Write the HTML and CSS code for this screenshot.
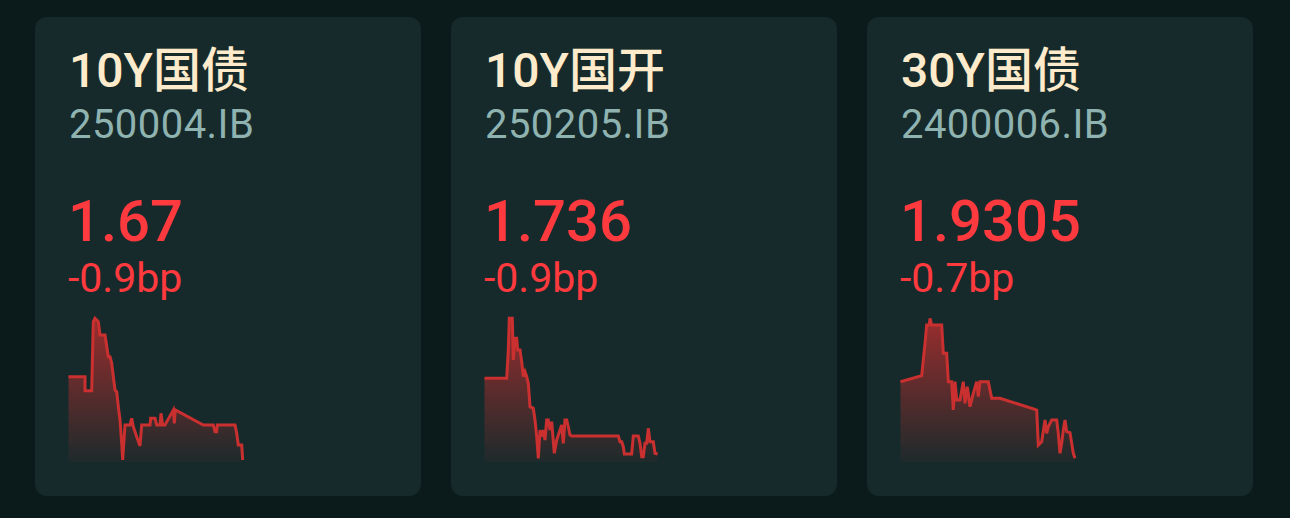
FILE: index.html
```html
<!DOCTYPE html>
<html lang="zh-CN">
<head>
<meta charset="utf-8">
<title>Bonds</title>
<link rel="stylesheet" href="styles.css">
</head>
<body>
<div class="board">
  <div class="card">
    <div class="title">10Y国债</div>
    <div class="code">250004.IB</div>
    <div class="price">1.67</div>
    <div class="change">-0.9bp</div>
    <svg class="chart" viewBox="0 0 176 146" width="176" height="146">
      <defs>
        <linearGradient id="g1" x1="0" y1="0" x2="0" y2="1">
          <stop offset="0" stop-color="#c62e2e" stop-opacity="0.75"/>
          <stop offset="1" stop-color="#c62e2e" stop-opacity="0.04"/>
        </linearGradient>
      </defs>
      <polygon class="area" fill="url(#g1)" points="0.5,146 0.5,60.7 17,60.7 17,74.7 23.7,74.7 25.3,5.7 27,2.3 30.3,5.7 32,19 37,19 40.3,40.7 42,40.7 43.7,47.3 45.3,60.7 47,74 48.7,75.7 50.3,90.7 52,104 53.7,127.3 54.7,144 57,109 62,109 63.7,102.3 65.3,110.7 68.7,120.7 72,130 73.7,109 82,109 82.7,102.3 87,102.3 88.7,109 92,109 93,97.3 94.7,109 97,109 105.3,94 106.3,107.3 107.3,94 135.3,109 145.3,109 147,115.7 148.7,115.7 149.3,109 167,109 168.7,117.3 170.3,129 173.7,129 174.7,144 174.7,146"/>
      <polyline class="line" points="0.5,60.7 17,60.7 17,74.7 23.7,74.7 25.3,5.7 27,2.3 30.3,5.7 32,19 37,19 40.3,40.7 42,40.7 43.7,47.3 45.3,60.7 47,74 48.7,75.7 50.3,90.7 52,104 53.7,127.3 54.7,144 57,109 62,109 63.7,102.3 65.3,110.7 68.7,120.7 72,130 73.7,109 82,109 82.7,102.3 87,102.3 88.7,109 92,109 93,97.3 94.7,109 97,109 105.3,94 106.3,107.3 107.3,94 135.3,109 145.3,109 147,115.7 148.7,115.7 149.3,109 167,109 168.7,117.3 170.3,129 173.7,129 174.7,144"/>
    </svg>
  </div>
  <div class="card">
    <div class="title">10Y国开</div>
    <div class="code">250205.IB</div>
    <div class="price">1.736</div>
    <div class="change">-0.9bp</div>
    <svg class="chart" viewBox="0 0 176 146" width="176" height="146">
      <defs>
        <linearGradient id="g2" x1="0" y1="0" x2="0" y2="1">
          <stop offset="0" stop-color="#c62e2e" stop-opacity="0.75"/>
          <stop offset="1" stop-color="#c62e2e" stop-opacity="0.04"/>
        </linearGradient>
      </defs>
      <polygon class="area" fill="url(#g2)" points="0.5,146 0.5,62.3 22.7,62.3 24.3,34 25.3,2.3 28.3,2.3 29.3,44 31,22.3 32.7,22.3 33.7,34 36,34 37.7,45.7 39.3,60.7 41,55.7 42.7,60.7 44.3,67.3 46,90.7 49.3,92.3 51,104 52.7,120.7 54.3,142.3 56,114 57.7,120.7 59.3,114 61,124 62.7,104 64.3,104 66,114 67.7,105.7 70.3,137.3 72.7,124 76,114 77.7,109 79.3,127.3 81,104 82.7,104 84.3,110.7 86,119 87.7,120 134.3,120 136,125.7 137.7,125.7 139.3,130.7 140.3,138 147.7,138 149.3,120 154.3,120 156,127.3 157.7,140.7 159.3,140.7 161,127.3 162.7,127.3 164.3,112.3 166,125.7 169.3,125.7 171,137.3 173.7,138 173.7,146"/>
      <polyline class="line" points="0.5,62.3 22.7,62.3 24.3,34 25.3,2.3 28.3,2.3 29.3,44 31,22.3 32.7,22.3 33.7,34 36,34 37.7,45.7 39.3,60.7 41,55.7 42.7,60.7 44.3,67.3 46,90.7 49.3,92.3 51,104 52.7,120.7 54.3,142.3 56,114 57.7,120.7 59.3,114 61,124 62.7,104 64.3,104 66,114 67.7,105.7 70.3,137.3 72.7,124 76,114 77.7,109 79.3,127.3 81,104 82.7,104 84.3,110.7 86,119 87.7,120 134.3,120 136,125.7 137.7,125.7 139.3,130.7 140.3,138 147.7,138 149.3,120 154.3,120 156,127.3 157.7,140.7 159.3,140.7 161,127.3 162.7,127.3 164.3,112.3 166,125.7 169.3,125.7 171,137.3 173.7,138"/>
    </svg>
  </div>
  <div class="card">
    <div class="title">30Y国债</div>
    <div class="code">2400006.IB</div>
    <div class="price">1.9305</div>
    <div class="change">-0.7bp</div>
    <svg class="chart" viewBox="0 0 176 146" width="176" height="146">
      <defs>
        <linearGradient id="g3" x1="0" y1="0" x2="0" y2="1">
          <stop offset="0" stop-color="#c62e2e" stop-opacity="0.75"/>
          <stop offset="1" stop-color="#c62e2e" stop-opacity="0.04"/>
        </linearGradient>
      </defs>
      <polygon class="area" fill="url(#g3)" points="0.5,146 0.5,65.7 21.7,59.7 25,27.3 26.7,9 29.3,9 30,2.3 31.7,9 41.7,9 43.3,37.3 46.7,37.3 48.3,65.7 51.7,65.7 53.3,94 55,65.7 56.7,84 60,84 63.3,65.7 65,87.3 67.3,70.7 70,90.7 73.3,77.3 76.7,65.7 78.3,80.7 80,65.7 88.3,65.7 91.7,82.3 100,82.3 135,93.3 136.7,94 138.3,129 141.7,125.7 145,104 146.7,117.3 148.3,110.7 151.7,104 156.7,104 158.3,117.3 160,137.3 161.7,127.3 163.3,114 165,104 166.7,115.7 170,116.7 171.7,127.3 173.3,137.3 175,142.3 175,146"/>
      <polyline class="line" points="0.5,65.7 21.7,59.7 25,27.3 26.7,9 29.3,9 30,2.3 31.7,9 41.7,9 43.3,37.3 46.7,37.3 48.3,65.7 51.7,65.7 53.3,94 55,65.7 56.7,84 60,84 63.3,65.7 65,87.3 67.3,70.7 70,90.7 73.3,77.3 76.7,65.7 78.3,80.7 80,65.7 88.3,65.7 91.7,82.3 100,82.3 135,93.3 136.7,94 138.3,129 141.7,125.7 145,104 146.7,117.3 148.3,110.7 151.7,104 156.7,104 158.3,117.3 160,137.3 161.7,127.3 163.3,114 165,104 166.7,115.7 170,116.7 171.7,127.3 173.3,137.3 175,142.3"/>
    </svg>
  </div>
</div>
</body>
</html>
```

FILE: styles.css
```css
html, body {
  margin: 0;
  padding: 0;
  background: #0b1a1a;
}

body {
  width: 1290px;
  height: 518px;
  overflow: hidden;
  font-family: "Roboto", "Noto Sans CJK SC", sans-serif;
}

.board {
  display: flex;
  gap: 30px;
  padding: 17px 37px 0 35px;
}

.card {
  flex: 0 0 386px;
  height: 479px;
  box-sizing: border-box;
  background: #172a2b;
  border-radius: 12px;
  padding: 25px 0 0 33px;
  display: flex;
  flex-direction: column;
  align-items: flex-start;
}

.title {
  font-size: 48px;
  line-height: 58px;
  font-weight: 500;
  color: #fdebcb;
  padding-left: 1px;
}

.code {
  font-size: 40px;
  line-height: 44px;
  letter-spacing: 0.45px;
  margin-top: 3px;
  color: #8fb3b0;
  padding-left: 1px;
}

.price {
  font-size: 58px;
  line-height: 64px;
  font-weight: 500;
  color: #ff3a3f;
  margin-top: 42px;
}

.change {
  font-size: 41px;
  line-height: 44px;
  color: #ff3a3f;
  margin-top: 3px;
}

.chart {
  display: block;
  margin-top: 16px;
  overflow: visible;
}

.chart .area {
  stroke: none;
}

.chart .line {
  fill: none;
  stroke: #c9302f;
  stroke-width: 3;
  stroke-linejoin: miter;
  stroke-linecap: butt;
}
```
